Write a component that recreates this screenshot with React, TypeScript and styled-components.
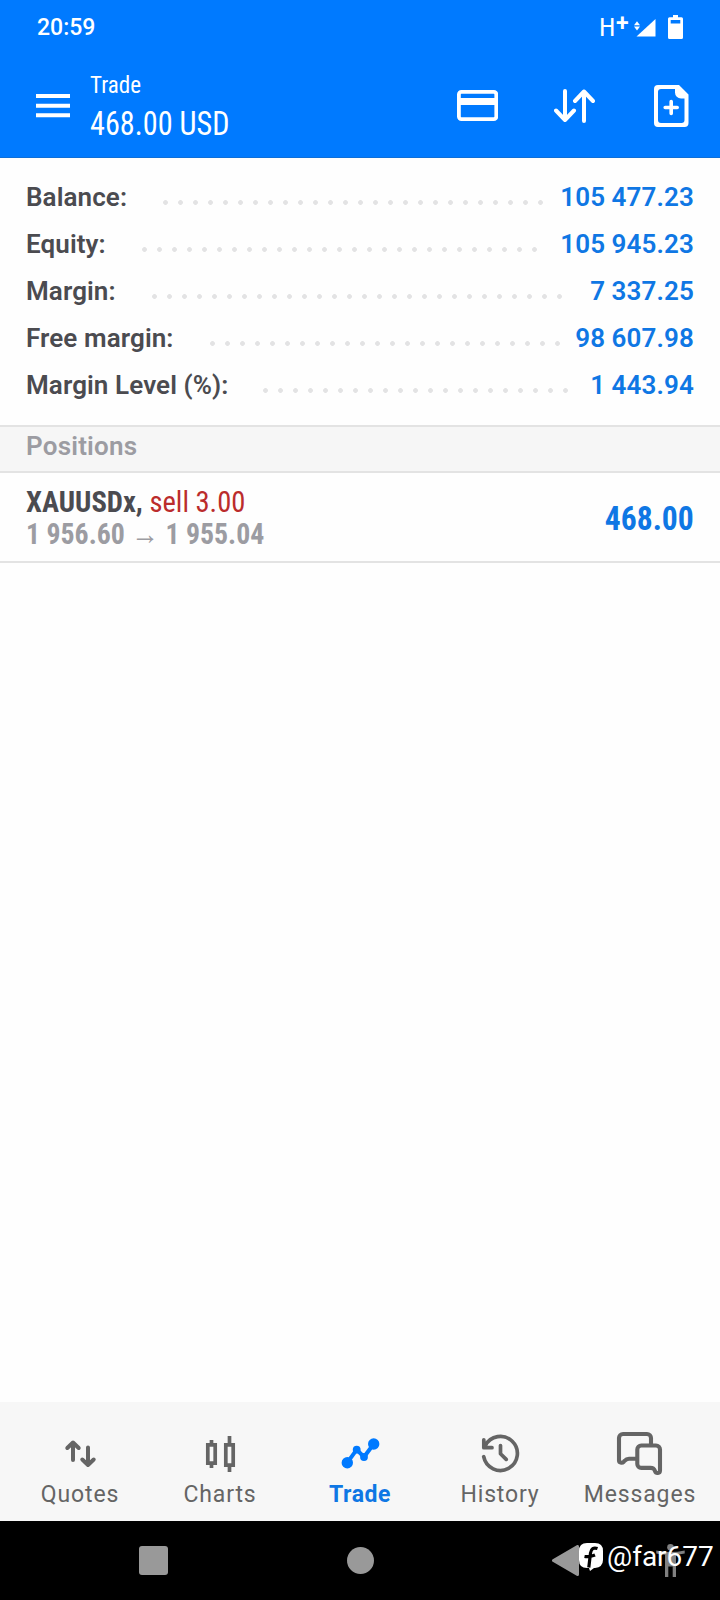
import React from 'react';
import styled, { createGlobalStyle } from 'styled-components';

const GlobalStyle = createGlobalStyle`
  * { box-sizing: border-box; }
  body { margin: 0; background: #fff; font-family: Roboto, "Liberation Sans", sans-serif; }
  svg { display: block; flex: none; }
`;

const Screen = styled.div`
  width: 720px;
  height: 1600px;
  display: flex;
  flex-direction: column;
  background: #fefefe;
  overflow: hidden;
`;

const Header = styled.header`
  height: 158px;
  background: #007aff;
  color: #fff;
  border-bottom: 1px solid #0e6fd8;
`;

const StatusBar = styled.div`
  height: 54px;
  padding: 0 37px;
  display: flex;
  align-items: center;
  justify-content: space-between;
`;

const Clock = styled.span`
  font-size: 23px;
  font-weight: 500;
  line-height: 54px;
  padding-top: 1px;
`;

const StatusIcons = styled.div`
  display: flex;
  align-items: center;
`;

const Network = styled.span`
  display: flex;
  width: 35px;
  font-size: 26.5px;
  font-weight: 400;
  font-stretch: 75%;
  letter-spacing: 1.5px;
  line-height: 26px;
`;

const Plus = styled.sup`
  font-size: 23px;
  font-weight: 600;
  font-stretch: 100%;
  letter-spacing: 0;
  line-height: 19px;
  margin-left: -1px;
`;

const AppBar = styled.div`
  height: 103px;
  padding: 0 31px 0 36px;
  display: flex;
  align-items: center;
`;

const Titles = styled.div`
  display: flex;
  flex-direction: column;
  gap: 4px;
  padding-top: 1px;
  margin-left: 20px;
  flex: 1;
`;

interface CondensedProps {
  $size: number;
  $line: number;
  $weight?: number;
  $scale?: number;
  $right?: boolean;
  $color?: string;
}

const Condensed = styled.span<CondensedProps>`
  font-size: ${p => p.$size}px;
  font-weight: ${p => p.$weight ?? 400};
  line-height: ${p => p.$line}px;
  color: ${p => p.$color ?? 'inherit'};
  font-stretch: 75%;
  transform: scaleX(${p => p.$scale ?? 1});
  transform-origin: ${p => (p.$right ? 'right' : 'left')} center;
  white-space: pre;
`;

const Actions = styled.div`
  display: grid;
  grid-template-columns: 97px 100px 35px;
  align-items: center;
`;

const Summary = styled.section`
  height: 267px;
  padding: 16px 26px 0;
`;

const SummaryRow = styled.div`
  height: 47px;
  display: flex;
  align-items: center;
  font-size: 26px;
  line-height: 47px;
  white-space: pre;
`;

const Label = styled.span<{ $width: number }>`
  width: ${p => p.$width}px;
  color: #4b4b50;
  font-weight: 600;
  letter-spacing: 0.1px;
`;

const Dots = styled.span<{ $count: number }>`
  width: ${p => p.$count * 15}px;
  height: 5px;
  margin-top: 10px;
  background: radial-gradient(circle at 2.5px 2.5px, #e3e3e4 2px, transparent 2.8px) 0 0 / 15px 5px repeat-x;
`;

const Value = styled.span`
  flex: 1;
  text-align: right;
  color: #0f77e4;
  font-weight: 600;
  letter-spacing: 0.15px;
  word-spacing: -0.4px;
`;

const SectionTitle = styled.h2`
  margin: 0;
  height: 48px;
  padding: 0 26px;
  background: #f6f6f6;
  border-top: 2px solid #e3e3e3;
  border-bottom: 2px solid #e3e3e3;
  color: #9c9ca2;
  font-size: 26px;
  font-weight: 600;
  letter-spacing: 0.2px;
  line-height: 38px;
`;

const Position = styled.div`
  height: 90px;
  padding: 2px 26px 0;
  display: flex;
  align-items: center;
  justify-content: space-between;
  border-bottom: 2px solid #e3e3e3;
`;

const PositionInfo = styled.div`
  display: flex;
  flex-direction: column;
  align-items: flex-start;
`;

const Side = styled.span`
  font-weight: 400;
  color: #bb2c2c;
`;

const TabBar = styled.nav`
  margin-top: auto;
  height: 119px;
  display: grid;
  grid-template-columns: repeat(5, 140px);
  justify-content: center;
  background: #f7f7f7;
`;

const Tab = styled.div<{ $active?: boolean }>`
  display: flex;
  flex-direction: column;
  align-items: center;
  padding-top: 27px;
  color: ${p => (p.$active ? '#007aff' : '#656565')};
`;

const TabLabel = styled.span<{ $active?: boolean }>`
  margin-top: 4px;
  font-size: 23px;
  font-weight: ${p => (p.$active ? 700 : 400)};
  letter-spacing: ${p => (p.$active ? 0.6 : 0.85)}px;
  line-height: 28px;
  color: ${p => (p.$active ? '#0f77e4' : '#656565')};
`;

const SystemNav = styled.div`
  position: relative;
  height: 79px;
  display: flex;
  align-items: center;
  background: #000;
`;

const Key = styled.div<{ $gap: number }>`
  margin-left: ${p => p.$gap}px;
  flex: none;
`;

const Watermark = styled.div`
  position: absolute;
  left: 579px;
  top: 16px;
  display: flex;
  align-items: center;
  gap: 4px;
  color: #fff;
  font-size: 28px;
  font-weight: 400;
  line-height: 40px;
`;

const MenuIcon = () => (
  <svg width="34" height="24" viewBox="0 0 34 24" fill="#fff">
    <path d="M0 0h34v4H0zM0 9.7h34v4H0zM0 19.2h34v4H0z" />
  </svg>
);

const CardIcon = () => (
  <svg width="41" height="31" viewBox="0 0 41 31" fill="none" stroke="#fff">
    <rect x="1.9" y="1.9" width="37.4" height="27.2" rx="2.5" strokeWidth="3.8" />
    <path d="M2 11.6h37" strokeWidth="7" />
  </svg>
);

const TransferIcon = () => (
  <svg width="41" height="34" viewBox="0 0 41 34" fill="none" stroke="#fff" strokeWidth="4" strokeLinecap="round" strokeLinejoin="round">
    <path d="M11 2v29M2 21.5l9 9.5 9-9.5M30 32V2.500M21 12l9-9.500 9 9.500" />
  </svg>
);

const NewOrderIcon = () => (
  <svg width="35" height="42" viewBox="0 0 35 42">
    <path
      fill="#fff"
      fillRule="evenodd"
      d="M4 0h21l9.500 9.500V38a4 4 0 0 1-4 4H4a4 4 0 0 1-4-4V4a4 4 0 0 1 4-4zM7 4a3 3 0 0 0-3 3v28a3 3 0 0 0 3 3h20.500a3 3 0 0 0 3-3V13.500H27a6 6 0 0 1-6-6V4z"
    />
    <path d="M17.200 16.500v12M11.200 22.500h12" stroke="#fff" strokeWidth="3.600" strokeLinecap="round" />
  </svg>
);

const SignalIcon = () => (
  <svg width="22" height="24" viewBox="0 0 22 24" fill="#fff">
    <path d="M21.500 4v17.500H2.500z" />
    <path d="M3 6.300l3 3.900H0zM3 15.500l3-3.900H0z" />
  </svg>
);

const BatteryIcon = () => (
  <svg width="15" height="24" viewBox="0 0 15 24">
    <path
      fill="#fff"
      fillRule="evenodd"
      d="M5 0h5v2.200h3.500A1.500 1.500 0 0 1 15 3.700v18.800a1.500 1.500 0 0 1-1.500 1.500h-12A1.500 1.500 0 0 1 0 22.500V3.700a1.500 1.500 0 0 1 1.500-1.500H5zM2.700 5v3.600h9.600V5z"
    />
  </svg>
);

const strokeProps = {
  width: 48,
  height: 48,
  viewBox: '0 0 48 48',
  fill: 'none',
  stroke: 'currentColor',
  strokeWidth: 4,
  strokeLinecap: 'round' as const,
  strokeLinejoin: 'round' as const,
};

const QuotesIcon = () => (
  <svg {...strokeProps}>
    <path d="M17 13.500v17.500M11.300 19l5.700-5.500 5.700 5.500M32 18.500V36M26.300 30.500l5.700 5.500 5.700-5.500" />
  </svg>
);

const ChartsIcon = () => (
  <svg {...strokeProps} strokeWidth={3.700} strokeLinecap="butt" strokeLinejoin="miter">
    <path d="M11.800 15.800h7.400v18.400h-7.400zM29.800 15.800h7.400v20.400h-7.400zM15.500 11v4M15.500 35v4M33.500 7v8M33.500 37v6" />
  </svg>
);

const TradeIcon = () => (
  <svg {...strokeProps}>
    <path d="M11.300 33.700L20.700 20.700 28 28l9.700-13" />
    <g fill="currentColor" stroke="none">
      <circle cx="11.300" cy="33.700" r="5.700" />
      <circle cx="20.700" cy="20.700" r="3.900" />
      <circle cx="28" cy="28" r="3.900" />
      <circle cx="37.700" cy="15" r="5.700" />
    </g>
  </svg>
);

const HistoryIcon = () => (
  <svg {...strokeProps} strokeWidth={3.700}>
    <path d="M7.700 27.700A17 17 0 1 0 9.200 16.800M7.800 10.800v7.900h8.200M24.500 16.500v8.200l5.700 5.700" />
  </svg>
);

const MessagesIcon = () => (
  <svg {...strokeProps} strokeWidth={4.100}>
    <path d="M35 15V9a4 4 0 0 0-4-4H7a4 4 0 0 0-4 4v22.500c0 2.200 3 3 4.800 1.200 2-2.200 2.400-2.900 5.200-2.900h8" />
    <path d="M25.300 16.500H40a4 4 0 0 1 4 4v21c0 3-4 3.400-5 .6-1-2.500-1.600-3.200-4.500-3.200h-9.200a4 4 0 0 1-4-4V20.500a4 4 0 0 1 4-4z" />
  </svg>
);

const RecentKey = () => (
  <svg width="29" height="29"><rect width="29" height="29" rx="3" fill="#999" /></svg>
);

const HomeKey = () => (
  <svg width="27" height="27"><circle cx="13.500" cy="13.500" r="13.500" fill="#999" /></svg>
);

const BackKey = () => (
  <svg width="27" height="31" viewBox="0 0 27 31">
    <path d="M1.500 15.500L25.500 1.500v28z" fill="#999" stroke="#999" strokeWidth="3" strokeLinejoin="round" />
  </svg>
);

const AccessKey = () => (
  <svg width="29" height="33" viewBox="0 0 29 33" fill="#808080">
    <circle cx="14.500" cy="3.300" r="3.300" />
    <path d="M.3 6.500q14.200 3 28.400 0v3q-4.500.9-8.700 1.300V33h-3.300V22.500h-4.400V33H9V10.800Q4.800 10.400.3 9.500z" />
  </svg>
);

const SocialLogo = () => (
  <svg width="24" height="28" viewBox="0 0 24 28">
    <path d="M8 0h8q8 0 8 8v9q0 7-8 8h-1l-4 3-1-3H8q-8 0-8-8V8q0-8 8-8z" fill="#fff" />
    <path d="M18.500 5.500q-6-2-7 4.500L9.800 24.500M5.500 13.500q5 .8 10.500-1.500" fill="none" stroke="#000" strokeWidth="3.200" />
  </svg>
);

const rows = [
  { label: 'Balance:', value: '105 477.23', offset: 137, dots: 26 },
  { label: 'Equity:', value: '105 945.23', offset: 116, dots: 27 },
  { label: 'Margin:', value: '7 337.25', offset: 126, dots: 28 },
  { label: 'Free margin:', value: '98 607.98', offset: 184, dots: 24 },
  { label: 'Margin Level (%):', value: '1 443.94', offset: 237, dots: 21 },
];

const tabs = [
  { name: 'Quotes', Icon: QuotesIcon },
  { name: 'Charts', Icon: ChartsIcon },
  { name: 'Trade', Icon: TradeIcon, active: true },
  { name: 'History', Icon: HistoryIcon },
  { name: 'Messages', Icon: MessagesIcon },
];

export default function App() {
  return (
    <>
      <GlobalStyle />
      <Screen>
        <Header>
          <StatusBar>
            <Clock>20:59</Clock>
            <StatusIcons>
              <Network>H<Plus>+</Plus></Network>
              <SignalIcon />
              <Key $gap={12}><BatteryIcon /></Key>
            </StatusIcons>
          </StatusBar>
          <AppBar>
            <MenuIcon />
            <Titles>
              <Condensed $size={24.5} $line={32} $scale={0.94}>Trade</Condensed>
              <Condensed $size={32.5} $line={38} $scale={0.93}>468.00 USD</Condensed>
            </Titles>
            <Actions>
              <CardIcon />
              <TransferIcon />
              <NewOrderIcon />
            </Actions>
          </AppBar>
        </Header>
        <Summary>
          {rows.map(r => (
            <SummaryRow key={r.label}>
              <Label $width={r.offset}>{r.label}</Label>
              <Dots $count={r.dots} />
              <Value>{r.value}</Value>
            </SummaryRow>
          ))}
        </Summary>
        <SectionTitle>Positions</SectionTitle>
        <Position>
          <PositionInfo>
            <Condensed $size={30} $weight={700} $line={32} $scale={0.952} $color="#4b4b50">
              XAUUSDx, <Side>sell 3.00</Side>
            </Condensed>
            <Condensed $size={30} $weight={700} $line={32} $scale={0.927} $color="#9c9ca2">1 956.60 → 1 955.04</Condensed>
          </PositionInfo>
          <Condensed $size={34} $weight={700} $line={40} $scale={0.93} $right $color="#0f77e4">468.00</Condensed>
        </Position>
        <TabBar>
          {tabs.map(({ name, Icon, active }) => (
            <Tab key={name} $active={active}>
              <Icon />
              <TabLabel $active={active}>{name}</TabLabel>
            </Tab>
          ))}
        </TabBar>
        <SystemNav>
          <Key $gap={139}><RecentKey /></Key>
          <Key $gap={178.5}><HomeKey /></Key>
          <Key $gap={178.5}><BackKey /></Key>
          <Key $gap={77}><AccessKey /></Key>
          <Watermark><SocialLogo />@far677</Watermark>
        </SystemNav>
      </Screen>
    </>
  );
}
